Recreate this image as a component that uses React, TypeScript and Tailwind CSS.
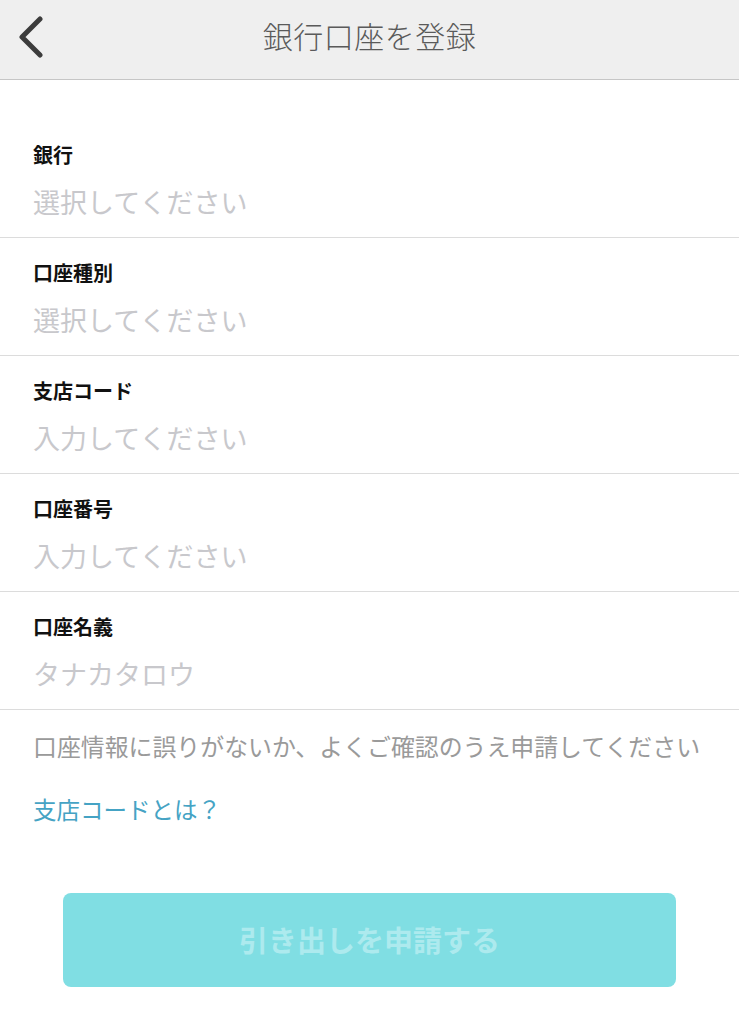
import React from 'react';

const fields = [
  { label: '銀行', placeholder: '選択してください' },
  { label: '口座種別', placeholder: '選択してください' },
  { label: '支店コード', placeholder: '入力してください' },
  { label: '口座番号', placeholder: '入力してください' },
  { label: '口座名義', placeholder: 'タナカタロウ' },
];

const font = { fontFamily: '"Noto Sans CJK JP", "Noto Sans", sans-serif' };

const App: React.FC = () => {
  return (
    <div className="w-[739px] min-h-[1024px] bg-white" style={font}>
      {/* Header */}
      <header className="relative h-[80px] bg-[#efefef] border-b border-[#c6c6c6] flex items-center justify-center">
        <button aria-label="戻る" className="absolute left-[12px] top-[14px] w-[36px] h-[46px] flex items-center justify-center">
          <svg width="30" height="42" viewBox="0 0 30 42" fill="none">
            <path d="M25 3 L7 21 L25 39" stroke="#3c3c3c" strokeWidth="5" strokeLinecap="round" strokeLinejoin="round" />
          </svg>
        </button>
        <h1 className="text-[30px] leading-[36px] text-[#5a5a5a] font-light tracking-[0.5px] -mt-[10px]">
          銀行口座を登録
        </h1>
      </header>

      {/* Form */}
      <div className="pt-[40px]">
        {fields.map((field, index) => (
          <div key={index} className="border-b border-[#dcdcdc] pl-[33px] pt-[23px] pb-[16px]">
            <div className="text-[20px] leading-[24px] font-bold text-[#111111]">{field.label}</div>
            <div className="mt-[18px] text-[27px] leading-[36px] text-[#c8c8cc] whitespace-nowrap -translate-y-[1px]">
              {field.placeholder}
            </div>
          </div>
        ))}
      </div>

      {/* Note */}
      <div className="pl-[33px] pt-[20px]">
        <p className="text-[23.9px] leading-[32px] text-[#9a9a9a] whitespace-nowrap">
          口座情報に誤りがないか、よくご確認のうえ申請してください
        </p>
        <a href="#" className="block mt-[31px] text-[23.5px] leading-[32px] text-[#45a3c4]">
          支店コードとは？
        </a>
      </div>

      {/* Submit */}
      <div className="px-[63px] mt-[68px]">
        <button
          disabled
          className="w-full h-[94px] rounded-[8px] bg-[#80dee3] text-[#adeaee] text-[29px] font-bold flex items-center justify-center"
        >
          引き出しを申請する
        </button>
      </div>
    </div>
  );
};

export default App;
